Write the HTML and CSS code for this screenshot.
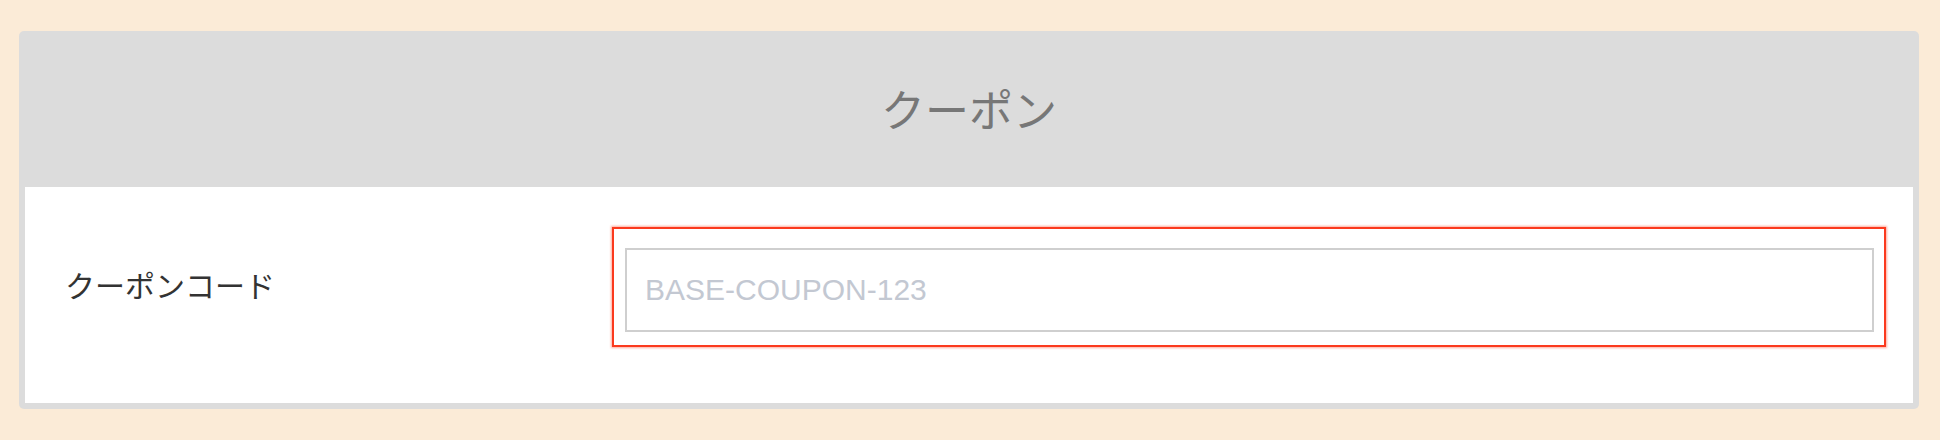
FILE: index.html
```html
<!DOCTYPE html>
<html lang="ja">
<head>
<meta charset="utf-8">
<title>クーポン</title>
<link rel="stylesheet" href="styles.css">
</head>
<body>
  <section class="card">
    <header class="card-head">
      <h1 class="card-title">クーポン</h1>
    </header>
    <div class="card-body">
      <label class="field-label" for="coupon">クーポンコード</label>
      <div class="field-wrap">
        <input class="field-input" id="coupon" type="text" placeholder="BASE-COUPON-123">
      </div>
    </div>
  </section>
</body>
</html>
```

FILE: styles.css
```css
html, body {
  margin: 0;
  padding: 0;
}

body {
  background: #fbebd7;
  padding: 31px 21px 0 19px;
  font-family: "Liberation Sans", "Noto Sans CJK JP", sans-serif;
}

.card {
  background: #dcdcdc;
  border-radius: 5px;
  padding: 0 6px 6px 6px;
  height: 378px;
  box-sizing: border-box;
  display: flex;
  flex-direction: column;
}

.card-head {
  height: 156px;
  display: flex;
  align-items: center;
  justify-content: center;
  padding-top: 5px;
  box-sizing: border-box;
}

.card-title {
  margin: 0;
  font-size: 44px;
  font-weight: normal;
  color: #777777;
  line-height: 1;
}

.card-body {
  flex: 1;
  background: #ffffff;
  display: grid;
  grid-template-columns: 547px 1fr;
  align-items: center;
  padding: 40px 27px 56px 40px;
}

.field-label {
  font-size: 30px;
  color: #333333;
  line-height: 1;
}

.field-wrap {
  border: 2px solid #fb3a1e;
  box-shadow: 0 0 2px 1px rgba(255, 70, 40, 0.45);
  padding: 19px 10px 13px 11px;
}

.field-input {
  display: block;
  width: 100%;
  box-sizing: border-box;
  height: 84px;
  border: 2px solid #cfcfcf;
  border-radius: 0;
  padding: 0 18px;
  font-family: "Liberation Sans", "Noto Sans CJK JP", sans-serif;
  font-size: 30px;
  color: #333333;
  background: #ffffff;
  outline: none;
  margin: 0;
}

.field-input::placeholder {
  color: #c3c8d2;
  opacity: 1;
}
```
